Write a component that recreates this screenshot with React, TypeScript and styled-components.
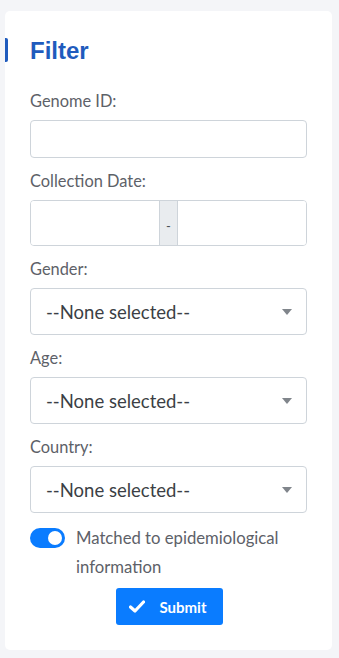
import React, { useState } from 'react'
import styled, { createGlobalStyle } from 'styled-components'

const Global = createGlobalStyle`
  html, body {
    margin: 0;
    padding: 0;
    background: #f4f5f8;
    font-family: Lato, "Liberation Sans", sans-serif;
  }
`

const Page = styled.div`
  padding: 11px 7px 8px 5px;
`

const Card = styled.div`
  background: #ffffff;
  border-radius: 5px;
  padding: 26px 25px 25px 25px;
  position: relative;
`

const TitleMark = styled.span`
  position: absolute;
  left: 0;
  top: 27px;
  width: 3px;
  height: 24px;
  background: #1f5bbd;
  border-radius: 0 2px 2px 0;
`

const Title = styled.h2`
  margin: 0 0 26px 0;
  font-family: "Liberation Sans", Arial, sans-serif;
  font-size: 24px;
  font-weight: 700;
  color: #1f5bbd;
  line-height: 28px;
`

const Field = styled.div`
  margin-bottom: 13px;
`

const Label = styled.label`
  display: block;
  font-size: 16.4px;
  line-height: 20px;
  color: #5d6168;
  margin-bottom: 9px;
`

const TextInput = styled.input`
  box-sizing: border-box;
  width: 100%;
  height: 38px;
  border: 1px solid #ced4da;
  border-radius: 4px;
  padding: 0 12px;
  font-size: 16px;
  font-family: inherit;
  outline: none;
`

const DateGroup = styled.div`
  box-sizing: border-box;
  display: flex;
  height: 46px;
  border: 1px solid #ced4da;
  border-radius: 4px;
  overflow: hidden;
`

const DateInput = styled.input`
  flex: 1;
  min-width: 0;
  border: none;
  outline: none;
  padding: 0 12px;
  font-family: inherit;
`

const Addon = styled.span`
  width: 17px;
  background: #e9ecef;
  border-left: 1px solid #ced4da;
  border-right: 1px solid #ced4da;
  display: flex;
  align-items: center;
  justify-content: center;
  padding-top: 6px;
  font-size: 13px;
  color: #495057;
`

const Select = styled.div`
  box-sizing: border-box;
  height: 47px;
  border: 1px solid #ced4da;
  border-radius: 4px;
  display: flex;
  align-items: center;
  justify-content: space-between;
  padding: 0 14px 0 15px;
  font-size: 18.5px;
  color: #3b3f45;
`

const Caret = styled.span`
  width: 0;
  height: 0;
  border-left: 5px solid transparent;
  border-right: 5px solid transparent;
  border-top: 6px solid #80858b;
`

/* margin collapses with the last Field's 13px */
const ToggleRow = styled.div`
  display: flex;
  align-items: flex-start;
  gap: 11px;
  margin-top: 15px;
`

const Switch = styled.button<{ $on: boolean }>`
  flex: none;
  width: 35px;
  height: 20px;
  border-radius: 10px;
  border: none;
  padding: 0;
  background: ${(p) => (p.$on ? '#0a7cff' : '#ced4da')};
  position: relative;
  cursor: pointer;
  &::after {
    content: '';
    position: absolute;
    top: 3px;
    left: ${(p) => (p.$on ? '18px' : '3px')};
    width: 14px;
    height: 14px;
    border-radius: 50%;
    background: #fff;
  }
`

const ToggleText = styled.span`
  font-size: 16.7px;
  line-height: 29px;
  color: #5d6168;
  margin-top: -4px;
`

const SubmitRow = styled.div`
  display: flex;
  justify-content: center;
  margin-top: 6px;
`

const SubmitButton = styled.button`
  display: flex;
  align-items: center;
  gap: 14px;
  height: 37px;
  padding: 0 16px 0 13px;
  border: none;
  border-radius: 3px;
  background: #0a7cff;
  color: #fff;
  font-family: inherit;
  font-size: 15px;
  font-weight: 700;
  margin-left: 2px;
`

function Dropdown() {
  return (
    <Select>
      <span>--None selected--</span>
      <Caret />
    </Select>
  )
}

export default function App() {
  const [matched, setMatched] = useState(true)
  return (
    <Page>
      <Global />
      <Card>
        <TitleMark />
        <Title>Filter</Title>
        <Field>
          <Label>Genome ID:</Label>
          <TextInput />
        </Field>
        <Field>
          <Label>Collection Date:</Label>
          <DateGroup>
            <DateInput />
            <Addon>-</Addon>
            <DateInput />
          </DateGroup>
        </Field>
        <Field>
          <Label>Gender:</Label>
          <Dropdown />
        </Field>
        <Field>
          <Label>Age:</Label>
          <Dropdown />
        </Field>
        <Field>
          <Label>Country:</Label>
          <Dropdown />
        </Field>
        <ToggleRow>
          <Switch $on={matched} onClick={() => setMatched(!matched)} />
          <ToggleText>Matched to epidemiological information</ToggleText>
        </ToggleRow>
        <SubmitRow>
          <SubmitButton>
            <svg width="16" height="13" viewBox="0 0 16 13">
              <path
                d="M1.5 7 L6 11 L14.5 2"
                fill="none"
                stroke="#fff"
                strokeWidth="3.2"
                strokeLinecap="round"
                strokeLinejoin="round"
              />
            </svg>
            Submit
          </SubmitButton>
        </SubmitRow>
      </Card>
    </Page>
  )
}
